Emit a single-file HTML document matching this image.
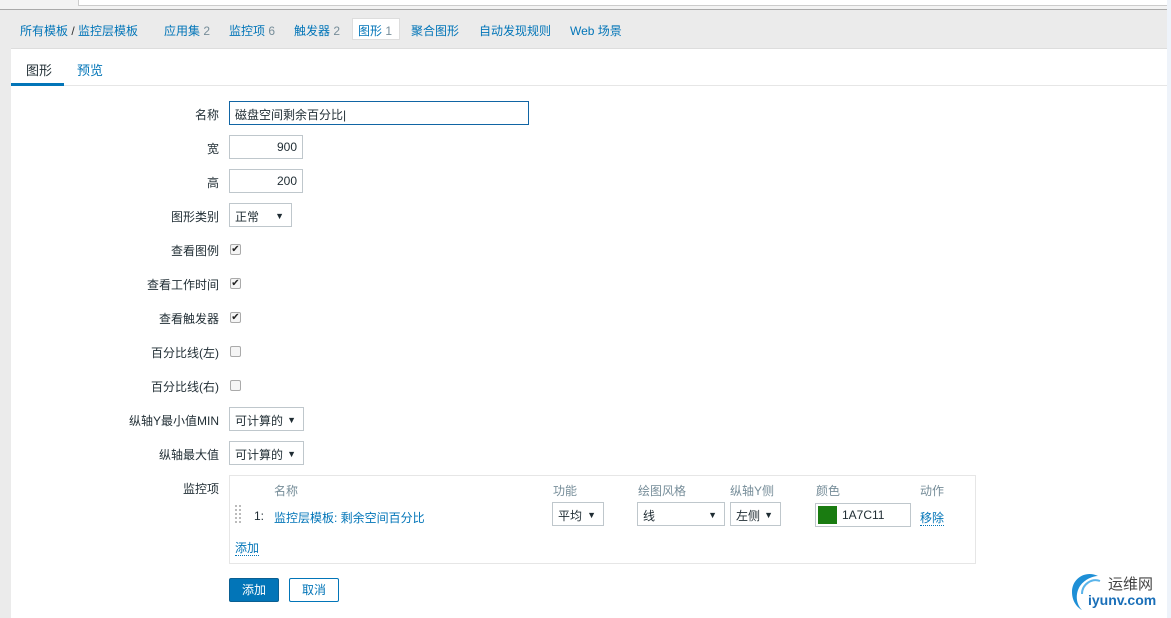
<!DOCTYPE html><html><head><meta charset="utf-8"><style>
*{margin:0;padding:0;box-sizing:border-box}
body{width:1171px;height:618px;overflow:hidden;background:#ebebeb;font-family:"Liberation Sans","Noto Sans CJK SC",sans-serif;font-size:12px;color:#1f2c33;position:relative}
.a{position:absolute}
a,.lk{color:#0275b8;text-decoration:none}
.cnt{color:#768d99}
.lbl{position:absolute;right:952px;text-align:right;white-space:nowrap}
.in{position:absolute;left:229px;height:24px;border:1px solid #bfc7cc;background:#fff;padding:4px 5px;white-space:nowrap}
.cb{position:absolute;left:230px;width:11px;height:11px;border:1px solid #aaa;background:#f5f5f5;border-radius:2px;font-size:10px;line-height:9px;text-align:center;color:#222}
.sel:after{content:"▼";position:absolute;right:7px;top:7px;font-size:9px}
</style></head><body>
<div class="a" style="left:0;top:0;width:1171px;height:10px;background:#f3f3f3;border-bottom:1px solid #aaa"></div>
<div class="a" style="left:78px;top:0;width:1090px;height:6px;background:#fff;border:1px solid #ccc;border-top:0"></div>
<div class="a" style="left:1167px;top:0;width:4px;height:618px;background:#eef3fa"></div>
<div class="a" style="left:20px;top:22px;white-space:nowrap;font-size:12px">
<a>所有模板</a> <span style="color:#333">/</span> <a>监控层模板</a></div>
<div class="a" style="left:164px;top:22px"><a>应用集</a> <span class="cnt">2</span></div>
<div class="a" style="left:229px;top:22px"><a>监控项</a> <span class="cnt">6</span></div>
<div class="a" style="left:294px;top:22px"><a>触发器</a> <span class="cnt">2</span></div>
<div class="a" style="left:352px;top:18px;width:48px;height:22px;background:#fff;border:1px solid #ddd;padding:3px 5px"><a>图形</a> <span class="cnt">1</span></div>
<div class="a" style="left:411px;top:22px"><a>聚合图形</a></div>
<div class="a" style="left:479px;top:22px"><a>自动发现规则</a></div>
<div class="a" style="left:570px;top:22px"><a>Web 场景</a></div>
<div class="a" style="left:11px;top:48px;width:1156px;height:570px;background:#fff;border-top:1px solid #ddd"></div>
<div class="a" style="left:11px;top:85px;width:1156px;height:1px;background:#e6e6e6"></div>
<div class="a" style="left:11px;top:83px;width:53px;height:3px;background:#0275b8"></div>
<div class="a" style="left:26px;top:60px;font-size:13px">图形</div>
<div class="a" style="left:77px;top:60px;font-size:13px"><a>预览</a></div>

<div class="lbl" style="top:106px">名称</div>
<div class="in" style="top:101px;width:300px;border-color:#1165a4">磁盘空间剩余百分比|</div>
<div class="lbl" style="top:140px">宽</div>
<div class="in" style="top:135px;width:74px;text-align:right">900</div>
<div class="lbl" style="top:174px">高</div>
<div class="in" style="top:169px;width:74px;text-align:right">200</div>
<div class="lbl" style="top:208px">图形类别</div>
<div class="in sel" style="top:203px;width:63px">正常</div>
<div class="lbl" style="top:242px">查看图例</div><div class="cb" style="top:244px">✔</div>
<div class="lbl" style="top:276px">查看工作时间</div><div class="cb" style="top:278px">✔</div>
<div class="lbl" style="top:310px">查看触发器</div><div class="cb" style="top:312px">✔</div>
<div class="lbl" style="top:344px">百分比线(左)</div><div class="cb" style="top:346px"></div>
<div class="lbl" style="top:378px">百分比线(右)</div><div class="cb" style="top:380px"></div>
<div class="lbl" style="top:412px">纵轴Y最小值MIN</div>
<div class="in sel" style="top:407px;width:75px">可计算的</div>
<div class="lbl" style="top:446px">纵轴最大值</div>
<div class="in sel" style="top:441px;width:75px">可计算的</div>
<div class="lbl" style="top:480px">监控项</div>

<div class="a" style="left:229px;top:475px;width:747px;height:89px;border:1px solid #e6e6e6"></div>
<div class="a" style="left:274px;top:482px;color:#768d99">名称</div>
<div class="a" style="left:553px;top:482px;color:#768d99">功能</div>
<div class="a" style="left:638px;top:482px;color:#768d99">绘图风格</div>
<div class="a" style="left:730px;top:482px;color:#768d99">纵轴Y侧</div>
<div class="a" style="left:816px;top:482px;color:#768d99">颜色</div>
<div class="a" style="left:920px;top:482px;color:#768d99">动作</div>
<div class="a" style="left:235px;top:505px;height:18px;border-left:2px dotted #bbb;border-right:2px dotted #bbb;width:6px"></div>
<div class="a" style="left:254px;top:509px">1:</div>
<div class="a" style="left:274px;top:509px"><a>监控层模板: 剩余空间百分比</a></div>
<div class="in sel" style="left:552px;top:502px;width:52px;height:24px">平均</div>
<div class="in sel" style="left:637px;top:502px;width:88px;height:24px">线</div>
<div class="in sel" style="left:730px;top:502px;width:51px;height:24px">左侧</div>
<div class="in" style="left:815px;top:503px;width:96px;height:24px;padding-left:26px">1A7C11</div>
<div class="a" style="left:818px;top:506px;width:19px;height:18px;background:#1a7c11"></div>
<div class="a" style="left:920px;top:509px"><a style="border-bottom:1px dotted #0275b8">移除</a></div>
<div class="a" style="left:235px;top:539px"><a style="border-bottom:1px dotted #0275b8">添加</a></div>

<div class="a" style="left:229px;top:578px;width:50px;height:24px;background:#0275b8;color:#fff;border:1px solid #0a5f92;border-radius:2px;text-align:center;line-height:22px">添加</div>
<div class="a" style="left:289px;top:578px;width:50px;height:24px;background:#fff;color:#0275b8;border:1px solid #0275b8;border-radius:2px;text-align:center;line-height:22px">取消</div>

<svg class="a" style="left:1068px;top:570px" width="40" height="42" viewBox="0 0 40 42"><path d="M30 6 C18 0 4 8 4 22 C4 32 10 38 14 40 C8 34 7 24 12 16 C17 9 25 6 30 6Z" fill="#1e8fd6"/><path d="M32 11 C24 8 14 14 14 24" stroke="#5ab4ea" stroke-width="2" fill="none"/></svg>
<div class="a" style="left:1108px;top:573px;font-size:15px;color:#444">运维网</div>
<div class="a" style="left:1088px;top:592px;font-size:14px;font-weight:bold;color:#1a6fb8">iyunv.com</div>
</body></html>
